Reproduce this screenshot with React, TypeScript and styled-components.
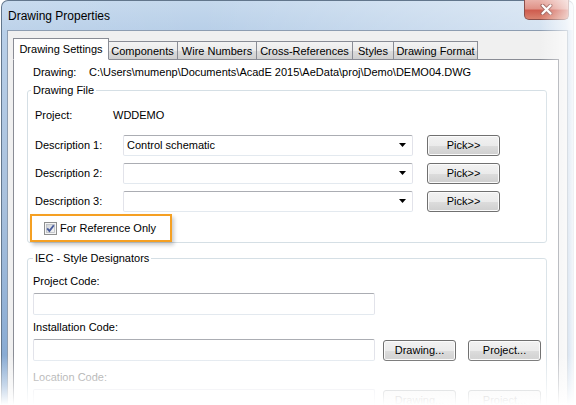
import React from 'react';
import styled, { createGlobalStyle } from 'styled-components';

const GlobalStyle = createGlobalStyle`
  html, body { margin: 0; padding: 0; background: #fff; }
  body {
    font-family: "Liberation Sans", Arial, sans-serif;
    font-size: 11px;
    color: #000;
  }
`;

const Page = styled.div`
  position: relative;
  width: 576px;
  height: 405px;
  overflow: hidden;
  background: #fff;
`;

const Window = styled.div`
  margin-left: 1px;
  width: 573px;
  height: 430px;
  box-sizing: border-box;
  border: 1px solid #62768c;
  border-bottom: none;
  border-radius: 7px 7px 0 0;
  background: linear-gradient(to bottom, #c4d8ed 0, #b8cfe8 30px, #a9c1dd 200px, #7ea4d0 405px);
  padding: 0 5px 0 5px;
  display: flex;
  flex-direction: column;
`;

const TitleBar = styled.div`
  height: 29px;
  display: flex;
  align-items: flex-start;
  margin: 0 -5px;
  padding: 0 5px;
  border-radius: 6px 6px 0 0;
  background: linear-gradient(to right, rgba(255,255,255,0.08) 0, rgba(255,255,255,0) 35%, rgba(255,255,255,0.45) 100%);
`;

const Title = styled.div`
  margin: 8px 0 0 1px;
  font-size: 12px;
  line-height: 14px;
  color: #000;
`;

const CloseButton = styled.div`
  margin: -1px -1px 0 auto;
  width: 45px;
  height: 20px;
  box-sizing: border-box;
  border: 1px solid #8c4f4a;
  border-top: none;
  border-radius: 0 0 5px 5px;
  background: linear-gradient(to bottom, #eab3ab 0, #e09388 45%, #cf5d4f 55%, #d9826f 100%);
  display: flex;
  align-items: center;
  justify-content: center;
`;

const Client = styled.div`
  flex: 1;
  background: #f0f0f0;
  border: 1px solid #8d9db1;
  border-bottom: none;
  padding: 7px 8px 0 5px;
  display: flex;
  flex-direction: column;
`;

const TabList = styled.div`
  display: flex;
  align-items: flex-end;
  height: 22px;
  margin-bottom: -1px;
  position: relative;
  z-index: 1;
`;

const Tab = styled.div<{ $w: number; $active?: boolean }>`
  width: ${p => p.$w}px;
  height: ${p => (p.$active ? 22 : 19)}px;
  box-sizing: border-box;
  border: 1px solid #898c95;
  border-bottom: ${p => (p.$active ? '1px solid #fff' : '1px solid #898c95')};
  border-left-width: ${p => (p.$active ? 1 : 0)}px;
  margin-right: ${p => (p.$active ? -1 : 0)}px;
  background: ${p => (p.$active ? '#fff' : 'linear-gradient(to bottom, #f3f3f3 0, #ebebeb 50%, #dddddd 51%, #cfcfcf 100%)')};
  display: flex;
  align-items: center;
  justify-content: center;
  padding-top: ${p => (p.$active ? 0 : 1)}px;
  white-space: nowrap;
  position: relative;
  z-index: ${p => (p.$active ? 2 : 1)};
`;

const TabPage = styled.div`
  flex: 1;
  background: #fff;
  border: 1px solid #898c95;
  border-bottom: none;
  padding: 6px 11px 0 13px;
  display: flex;
  flex-direction: column;
`;

const PathLine = styled.div`
  display: flex;
  height: 13px;
  line-height: 13px;
  padding-left: 6px;
  white-space: nowrap;
`;

const Label = styled.div<{ $w?: number; $disabled?: boolean }>`
  width: ${p => (p.$w ? `${p.$w}px` : 'auto')};
  flex-shrink: 0;
  line-height: 13px;
  white-space: nowrap;
  color: ${p => (p.$disabled ? '#8d8d8d' : '#000')};
`;

const Group = styled.fieldset<{ $top: number; $pad: number }>`
  margin: ${p => p.$top}px 0 0 0;
  padding: 0 ${p => p.$pad}px 0 ${p => p.$pad}px;
  border: 1px solid #d5dfe5;
  border-radius: 3px;
  display: flex;
  flex-direction: column;
  min-width: 0;
`;

const Legend = styled.legend<{ $shift: number }>`
  margin-left: ${p => p.$shift}px;
  padding: 0 2px;
  line-height: 13px;
  color: #000;
`;

const Row = styled.div<{ $top: number }>`
  display: flex;
  align-items: center;
  height: 22px;
  margin-top: ${p => p.$top}px;
`;

const Combo = styled.div`
  width: 290px;
  height: 21px;
  box-sizing: border-box;
  border: 1px solid #e2e3ea;
  border-top-color: #abadb3;
  border-bottom-color: #e3e9ef;
  border-radius: 2px;
  background: #fff;
  display: flex;
  align-items: center;
  padding: 0 6px 0 3px;
`;

const ComboText = styled.div`
  flex: 1;
  line-height: 13px;
`;

const TextBox = styled.div<{ $disabled?: boolean }>`
  width: 342px;
  height: 22px;
  box-sizing: border-box;
  border: 1px solid #e2e3ea;
  border-top-color: ${p => (p.$disabled ? '#e2e3ea' : '#abadb3')};
  border-bottom-color: #e3e9ef;
  border-radius: 2px;
  background: #fff;
`;

const Button = styled.div<{ $left: number; $disabled?: boolean }>`
  margin-left: ${p => p.$left}px;
  width: 73px;
  height: 21px;
  box-sizing: border-box;
  border: 1px solid ${p => (p.$disabled ? '#adb2b5' : '#707070')};
  border-radius: 3px;
  background: ${p => (p.$disabled ? '#f4f4f4' : 'linear-gradient(to bottom, #f2f2f2 0, #ebebeb 50%, #dddddd 51%, #cfcfcf 100%)')};
  box-shadow: inset 0 0 0 1px ${p => (p.$disabled ? '#f4f4f4' : '#fbfbfb')};
  color: ${p => (p.$disabled ? '#838383' : '#000')};
  display: flex;
  align-items: center;
  justify-content: center;
  line-height: 13px;
  flex-shrink: 0;
`;

const Highlight = styled.div`
  margin: 2px 0 0 -5px;
  width: 142px;
  height: 28px;
  box-sizing: border-box;
  border: 2px solid #f5a023;
  box-shadow: 2px 3px 4px rgba(0, 0, 0, 0.22);
  display: flex;
  align-items: center;
  padding-left: 12px;
  gap: 3px;
  background: #fff;
`;

const FieldLabel = styled(Label)<{ $top: number }>`
  margin-top: ${p => p.$top}px;
`;

const Fade = styled.div`
  position: absolute;
  inset: 0;
  pointer-events: none;
  background:
    linear-gradient(to bottom, rgba(255,255,255,0) 355px, rgba(255,255,255,0.55) 385px, #fff 405px),
    linear-gradient(to right, rgba(255,255,255,0) 540px, rgba(255,255,255,0.6) 566px, #fff 576px);
`;

const CloseGlyph = () => (
  <svg width="13" height="11" viewBox="0 0 13 11">
    <path d="M2.5 1.5 L10.5 9.5 M10.5 1.5 L2.5 9.5" stroke="#9c5c56" strokeWidth="4" strokeLinecap="round" />
    <path d="M2.5 1.5 L10.5 9.5 M10.5 1.5 L2.5 9.5" stroke="#fff" strokeWidth="2.2" strokeLinecap="round" />
  </svg>
);

const ArrowGlyph = () => (
  <svg width="7" height="4" viewBox="0 0 7 4">
    <path d="M0 0 H7 L3.5 4 Z" fill="#000" />
  </svg>
);

const CheckGlyph = () => (
  <svg width="13" height="13" viewBox="0 0 13 13">
    <defs>
      <linearGradient id="cbg" x1="0" y1="0" x2="1" y2="1">
        <stop offset="0" stopColor="#cfd2d6" />
        <stop offset="1" stopColor="#f6f6f6" />
      </linearGradient>
    </defs>
    <rect x="0.5" y="0.5" width="12" height="12" fill="#f4f4f4" stroke="#8e8f8f" />
    <rect x="2.5" y="2.5" width="8" height="8" fill="url(#cbg)" stroke="#b9bcc1" strokeWidth="0.8" />
    <path d="M3.2 6.4 L5.4 9 L9.8 3.2" fill="none" stroke="#4a5d9c" strokeWidth="1.9" />
  </svg>
);

const tabs = [
  { name: 'Drawing Settings', w: 96, active: true },
  { name: 'Components', w: 70 },
  { name: 'Wire Numbers', w: 79 },
  { name: 'Cross-References', w: 96 },
  { name: 'Styles', w: 41 },
  { name: 'Drawing Format', w: 84 },
];

const descriptions = [
  { label: 'Description 1:', value: 'Control schematic', top: 8 },
  { label: 'Description 2:', value: '', top: 6 },
  { label: 'Description 3:', value: '', top: 6 },
];

export default function App() {
  return (
    <Page>
      <GlobalStyle />
      <Window>
        <TitleBar>
          <Title>Drawing Properties</Title>
          <CloseButton>
            <CloseGlyph />
          </CloseButton>
        </TitleBar>
        <Client>
          <TabList>
            {tabs.map(t => (
              <Tab key={t.name} $w={t.w} $active={t.active}>
                {t.name}
              </Tab>
            ))}
          </TabList>
          <TabPage>
            <PathLine>
              <Label $w={56}>Drawing:</Label>
              <Label>C:\Users\mumenp\Documents\AcadE 2015\AeData\proj\Demo\DEMO04.DWG</Label>
            </PathLine>

            <Group $top={5} $pad={7}>
              <Legend $shift={-4}>Drawing File</Legend>
              <Row $top={7}>
                <Label $w={78}>Project:</Label>
                <Label>WDDEMO</Label>
              </Row>
              {descriptions.map(d => (
                <Row key={d.label} $top={d.top}>
                  <Label $w={88}>{d.label}</Label>
                  <Combo>
                    <ComboText>{d.value}</ComboText>
                    <ArrowGlyph />
                  </Combo>
                  <Button $left={14}>Pick&gt;&gt;</Button>
                </Row>
              ))}
              <Highlight>
                <CheckGlyph />
                <Label>For Reference Only</Label>
              </Highlight>
            </Group>

            <Group $top={9} $pad={5}>
              <Legend $shift={0}>IEC - Style Designators</Legend>
              <FieldLabel $top={10}>Project Code:</FieldLabel>
              <Row $top={5}>
                <TextBox />
              </Row>
              <FieldLabel $top={6}>Installation Code:</FieldLabel>
              <Row $top={5}>
                <TextBox />
                <Button $left={8}>Drawing...</Button>
                <Button $left={12}>Project...</Button>
              </Row>
              <FieldLabel $top={10} $disabled>Location Code:</FieldLabel>
              <Row $top={5}>
                <TextBox $disabled />
                <Button $left={8} $disabled>Drawing...</Button>
                <Button $left={12} $disabled>Project...</Button>
              </Row>
            </Group>
          </TabPage>
        </Client>
      </Window>
      <Fade />
    </Page>
  );
}
